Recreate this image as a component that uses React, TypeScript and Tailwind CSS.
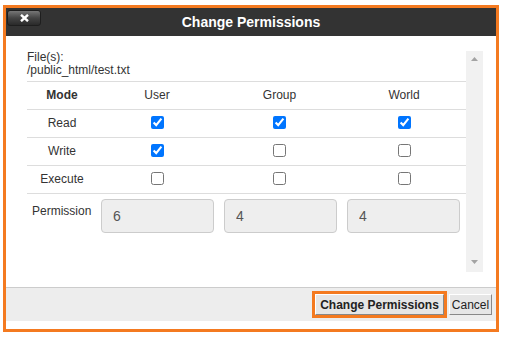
import React from "react";

type PermRow = {
	label: string;
	user: boolean;
	group: boolean;
	world: boolean;
};

const ROWS: PermRow[] = [
	{ label: "Read", user: true, group: true, world: true },
	{ label: "Write", user: true, group: false, world: false },
	{ label: "Execute", user: false, group: false, world: false },
];

const VALUES = ["6", "4", "4"];

function Cell({ children, bold }: { children: React.ReactNode; bold?: boolean }) {
	return (
		<div
			className={
				"flex h-[27px] items-center justify-center pb-[1px] text-[12px] text-[#333] " +
				(bold ? "font-bold" : "")
			}
		>
			{children}
		</div>
	);
}

function Box({ checked }: { checked: boolean }) {
	return (
		<input
			type="checkbox"
			defaultChecked={checked}
			className="m-0 mb-[1px] h-[13px] w-[13px]"
		/>
	);
}

export default function App() {
	return (
		<div className="h-[344px] w-[512px] overflow-hidden bg-white font-['Liberation_Sans',Arial,sans-serif]">
			<div className="ml-[3px] mt-[5px] flex h-[327px] w-[496px] flex-col border-[3px] border-[#f47a20]">
				{/* title bar */}
				<div className="relative flex h-[28px] items-center justify-center bg-[#333]">
					<button
						type="button"
						className="absolute left-[1px] top-[2px] flex h-[16px] w-[34px] items-center justify-center rounded-[3px] border border-[#1e1e1e] bg-gradient-to-b from-[#777] via-[#444] to-[#2a2a2a]"
						aria-label="Close"
					>
						<svg width="9" height="8" viewBox="0 0 9 8" aria-hidden="true">
							<path d="M1 0.8 L8 7.2 M8 0.8 L1 7.2" stroke="#fff" strokeWidth="2.4" />
						</svg>
					</button>
					<h1 className="text-[14px] font-bold text-white">Change Permissions</h1>
				</div>

				{/* body */}
				<div className="flex h-[251px] pb-[15px] pl-[15px] pr-[13px] pt-[15px]">
					<div className="flex flex-1">
						<div className="flex-1 pl-[6px]">
							<p className="text-[12px] leading-[13px] text-[#333]">File(s):</p>
							<p className="text-[12px] leading-[13px] text-[#333]">/public_html/test.txt</p>

							<div className="mt-[4px] grid grid-cols-[70px_120px_125px_124px]">
								<div className="col-span-4 grid grid-cols-subgrid border-t border-[#ddd]">
									<Cell bold>Mode</Cell>
									<Cell>User</Cell>
									<Cell>Group</Cell>
									<Cell>World</Cell>
								</div>
								{ROWS.map((row) => (
									<div
										key={row.label}
										className="col-span-4 grid grid-cols-subgrid border-t border-[#ddd]"
									>
										<Cell>{row.label}</Cell>
										<Cell>
											<Box checked={row.user} />
										</Cell>
										<Cell>
											<Box checked={row.group} />
										</Cell>
										<Cell>
											<Box checked={row.world} />
										</Cell>
									</div>
								))}
								<div className="col-span-4 flex border-t border-[#ddd] pr-[6px] pt-[5px]">
									<span className="w-[74px] px-[5px] pt-[3px] text-[12px] text-[#333]">
										Permission
									</span>
									<div className="flex flex-1 gap-[10px]">
										{VALUES.map((v, i) => (
											<input
												key={i}
												type="text"
												value={v}
												disabled
												readOnly
												className="h-[34px] w-0 flex-1 rounded-[4px] border border-[#ccc] bg-[#eee] px-[11px] text-[14px] text-[#555]"
											/>
										))}
									</div>
								</div>
							</div>
						</div>

						{/* scrollbar */}
						<div className="flex w-[17px] flex-col items-center justify-between bg-[#f1f1f1] pb-[8px] pt-[6px]">
							<svg width="7" height="4" viewBox="0 0 7 4" aria-hidden="true">
								<path d="M3.5 0 L7 4 L0 4 Z" fill="#a3a3a3" />
							</svg>
							<svg width="7" height="4" viewBox="0 0 7 4" aria-hidden="true">
								<path d="M0 0 L7 0 L3.5 4 Z" fill="#a3a3a3" />
							</svg>
						</div>
					</div>
				</div>

				{/* footer */}
				<div className="flex h-[34px] items-center justify-end gap-[2px] border-t border-[#ccc] bg-[#ededed] pr-[4px]">
					<span className="border-[3px] border-[#f47a20]">
						<button
							type="button"
							className="flex h-[21px] w-[129px] items-center justify-center border border-b-[#888] border-l-white border-r-[#888] border-t-white bg-[#e6e6e6] text-[12px] font-bold text-[#222]"
						>
							Change Permissions
						</button>
					</span>
					<button
						type="button"
						className="flex h-[21px] w-[43px] items-center justify-center border border-b-[#888] border-l-white border-r-[#888] border-t-white bg-[#e6e6e6] text-[12px] text-[#222]"
					>
						Cancel
					</button>
				</div>
				<div className="h-[8px] bg-white" />
			</div>
		</div>
	);
}
